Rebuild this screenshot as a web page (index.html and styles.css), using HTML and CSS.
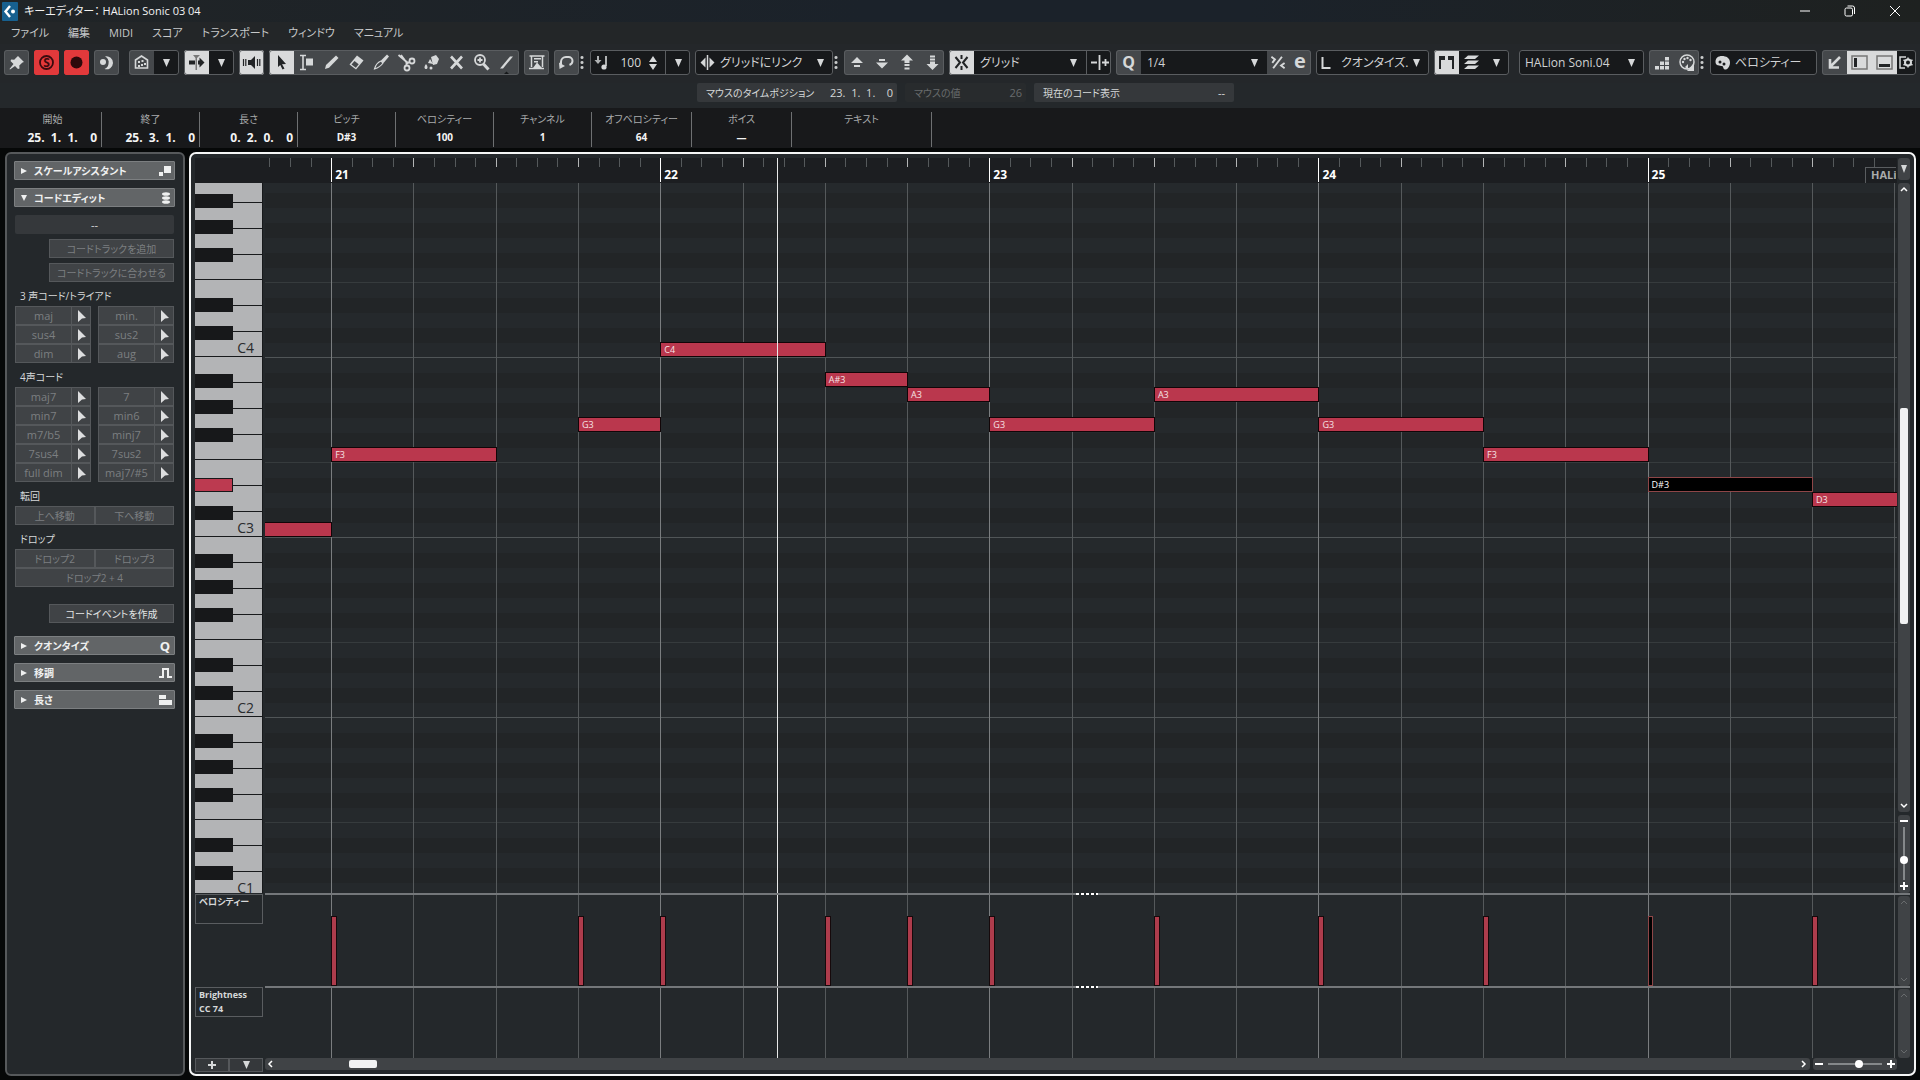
FILE: index.html
```html
<!DOCTYPE html>
<html lang="ja">
<head>
  <meta charset="UTF-8" />
  <meta name="viewport" content="width=device-width, initial-scale=1.0" />
  <title>キーエディター： HALion Sonic 03 04</title>
  <link rel="stylesheet" href="styles.css">
</head>
<body>
  <svg class="sprite" aria-hidden="true">
    <symbol id="down" viewBox="0 0 25 25"><path d="M9 9h7l-3.500 8z"/></symbol>
    <symbol id="cursor" viewBox="0 0 12 14"><path d="M3 1l8 8-4 .4L3 13z"/></symbol>
  </svg>

  <header class="titlebar">
    <svg class="logo" viewBox="0 0 16 19"><rect width="16" height="19" rx="1"/><path d="M8 4L3.500 9.500 8 15" fill="none" stroke="#fff" stroke-width="2.400"/><circle cx="11" cy="9.500" r="2" fill="#fff"/></svg>
    <h1>キーエディター： HALion Sonic 03 04</h1>
    <div class="window-buttons">
      <button aria-label="最小化"><svg viewBox="0 0 12 12"><path d="M1 6h10"/></svg></button>
      <button aria-label="元に戻す"><svg viewBox="0 0 12 12"><rect x="1" y="3" width="7.500" height="8" rx="1.500"/><path d="M3.500 1h5a2 2 0 0 1 2 2v6"/></svg></button>
      <button aria-label="閉じる"><svg viewBox="0 0 12 12"><path d="M1 1l10 10M11 1L1 11"/></svg></button>
    </div>
  </header>

  <nav class="menubar">
    <a href="#">ファイル</a>
    <a href="#">編集</a>
    <a href="#">MIDI</a>
    <a href="#">スコア</a>
    <a href="#">トランスポート</a>
    <a href="#">ウィンドウ</a>
    <a href="#">マニュアル</a>
  </nav>

  <div class="toolbar">
    <div class="group"><button class="tool" aria-label="ピン"><svg viewBox="0 0 25 25"><path d="M14 6l6 6-1.500.5-3.200 3 .2 3-1.500.5-3-3L6 19.500l-.500-.500 4-5-3-3 .7-1.400 3 .1 3-3z"/></svg></button></div>
    <div class="group red"><button class="tool" aria-label="ソロ"><svg viewBox="0 0 25 25"><circle cx="12.500" cy="12.500" r="6.500" fill="none" stroke="#3a0b0e" stroke-width="1.800"/><text x="12.500" y="17" class="mark">S</text></svg></button></div>
    <div class="group red"><button class="tool" aria-label="録音"><svg viewBox="0 0 25 25"><circle cx="12.500" cy="12.500" r="6" fill="#2c090b"/></svg></button></div>
    <div class="group"><button class="tool" aria-label="待機"><svg viewBox="0 0 25 25"><path d="M11 6.500a6.500 6.500 0 1 1-.5 12.500 7 7 0 0 0 .5-12.500z"/><circle cx="9.500" cy="11.500" r="4.800" fill="#45484b"/><circle cx="9" cy="12" r="3"/></svg></button></div>

    <div class="group dark spaced">
      <button class="tool raised" aria-label="表示"><svg viewBox="0 0 25 25"><path d="M6.500 18V10l6-4 6 4v8z" fill="none" stroke="currentColor" stroke-width="1.600"/><path d="M9 11h2v2H9zM12.500 10h2v2h-2zM15 13h2v2h-2zM9 15h2v2H9zM12 14h2v2h-2z"/></svg></button>
      <button class="tool" aria-label="表示メニュー"><svg><use href="#down"/></svg></button>
    </div>
    <div class="group dark">
      <button class="tool on" aria-label="オートスクロール"><svg viewBox="0 0 25 25"><path d="M5 10.500h6v4H5zM14 10.500h1.500V7.500l5 5-5 5v-3H14z"/><path d="M9 5h7l-3 3v12h-1.500V8z" fill="#777"/></svg></button>
      <button class="tool" aria-label="スクロールメニュー"><svg><use href="#down"/></svg></button>
    </div>
    <div class="group"><button class="tool on" aria-label="試聴"><svg viewBox="0 0 25 25"><path d="M9 10h3l4-4v13l-4-4H9z"/><path d="M4.500 9v7M6.800 9v7M18.500 9v7M20.800 9v7" stroke="currentColor" stroke-width="1.200"/></svg></button></div>

    <div class="group tools">
      <button class="tool on" aria-label="選択"><svg viewBox="0 0 25 25"><path d="M9 5l8 9-4 .3 2.500 4.200-2 1-2.200-4.500L9 17z"/></svg></button>
      <button class="tool" aria-label="範囲"><svg viewBox="0 0 25 25"><path d="M6 5.500h6M6 19.500h6M9 5.500v14" stroke="currentColor" stroke-width="1.600"/><path d="M12 8.500h7v7h-7z"/></svg></button>
      <button class="tool" aria-label="鉛筆"><svg viewBox="0 0 25 25"><path d="M6 19l1-4L17 5.500l2.500 2.500-9.500 9.800z"/></svg></button>
      <button class="tool" aria-label="消しゴム"><svg viewBox="0 0 25 25"><path d="M13 5.500l6.500 5-7.500 9-6.500-5z"/><path d="M10.500 11l4.200 3.300-2.900 3.500-4.300-3.200z" fill="#45484b"/></svg></button>
      <button class="tool" aria-label="トリム"><svg viewBox="0 0 25 25"><path d="M5.500 19c1-4 4-7 6.500-8l2 2c-2 3-5 5-8.500 6z" fill="none" stroke="currentColor" stroke-width="1.200"/><path d="M12 10.500l6-6 2 2-5.500 6.500z"/></svg></button>
      <button class="tool" aria-label="はさみ"><svg class="stroked" viewBox="0 0 25 25"><path d="M4.500 5l10 8.500M7 5l5.500 7.500M15.500 12.500l-3 0v3"/><circle cx="18" cy="11" r="2.500"/><circle cx="13" cy="18" r="2.500"/></svg></button>
      <button class="tool" aria-label="のり"><svg viewBox="0 0 25 25"><path d="M12 7l5-2 3 4-2 5-4 1zM11 9l3 5-5-1zM7 14c2 2.500 2 5 0 5s-2-2.500 0-5z"/><circle cx="12" cy="18" r="1.500"/></svg></button>
      <button class="tool" aria-label="ミュート"><svg viewBox="0 0 25 25"><path d="M7 6.500l11 12M18 6.500l-11 12" stroke="currentColor" stroke-width="2.600"/></svg></button>
      <button class="tool" aria-label="ズーム"><svg class="stroked" viewBox="0 0 25 25"><circle cx="11" cy="10" r="5"/><path d="M14.500 14l5 5.500" stroke-width="3"/><path d="M11 7.500v5M8.500 10h5"/></svg></button>
      <button class="tool" aria-label="ライン"><svg viewBox="0 0 25 25"><path d="M6 18.500L16 6.500h3L9 18.500z"/><path d="M9 25l3.500-3.500L16 25z" fill="#16181a"/></svg></button>
    </div>
    <div class="group"><button class="tool" aria-label="自動選択"><svg viewBox="0 0 25 25"><path d="M5.500 6h15M7.500 6v11M18.500 6v11M5 18.500h15" stroke="currentColor" stroke-width="1.500"/><path d="M9 18l4-5.500 5 5.500zM10 8h7v1.500h-7zM10 11h4v1.500h-4z"/></svg></button></div>
    <div class="group"><button class="tool" aria-label="ループ"><svg viewBox="0 0 25 25"><path d="M7 15V12a5 5 0 0 1 5-5h2.500a4 4 0 0 1 4 4c0 2-.5 3-3 4" fill="none" stroke="currentColor" stroke-width="2"/><path d="M5 12.500l6 3.500-5.500 3z"/></svg></button></div>
    <span class="dots"></span>

    <div class="group dark velocity-insert">
      <svg class="icon" viewBox="0 0 25 25"><path d="M7 6v4H4.500L8 14l3.500-4H9V6z" opacity=".8"/><path d="M16 6v10" stroke="currentColor" stroke-width="1.600"/><circle cx="14" cy="17" r="2.600"/></svg>
      <input type="text" value="100" aria-label="挿入ベロシティー">
      <button class="step" aria-label="増減"><svg viewBox="0 0 10 16"><path d="M5 1l4 6H1zM5 15l4-6H1z"/></svg></button>
      <button class="tool divided" aria-label="ベロシティーメニュー"><svg><use href="#down"/></svg></button>
    </div>
    <label class="group dark link">
      <svg class="icon" viewBox="0 0 25 25"><path d="M12.500 5v15" stroke="currentColor" stroke-width="1.500"/><path d="M10.500 7.500v10l-5-5zM14.500 7.500v10l5-5z"/></svg>
      <select aria-label="長さ"><option>グリッドにリンク</option></select>
      <svg class="arrow"><use href="#down"/></svg>
    </label>
    <span class="dots"></span>
    <div class="group">
      <button class="tool" aria-label="上へ"><svg viewBox="0 0 25 25"><path d="M7 13l6-6 6 6zM10 15h6v2h-6z"/></svg></button>
      <button class="tool" aria-label="下へ"><svg viewBox="0 0 25 25"><path d="M10 9h6v2h-6zM7 12.500h12l-6 6z"/></svg></button>
      <button class="tool" aria-label="オクターブ上"><svg viewBox="0 0 25 25"><path d="M7 10.500L13 4.500l6 6h-3.500V13h-5v-2.500zM10.500 14h5v2h-5zM10.500 17.500h5v2h-5z"/></svg></button>
      <button class="tool" aria-label="オクターブ下"><svg viewBox="0 0 25 25"><path d="M11 5.500h5v2h-5zM11 8.500h5v2h-5zM11 11.500h5V14h3.500l-6 6-6-6H11z"/></svg></button>
    </div>

    <label class="group dark snap">
      <span class="tool on"><svg viewBox="0 0 25 25"><path d="M12.500 5v4M12.500 16v4" stroke="currentColor" stroke-width="2"/><path d="M6.500 7l4.500 5.500-4.500 5.500M18.500 7l-4.500 5.500 4.500 5.500" fill="none" stroke="currentColor" stroke-width="2"/></svg></span>
      <select aria-label="スナップタイプ"><option>グリッド</option></select>
      <svg class="arrow"><use href="#down"/></svg>
      <span class="tool divided"><svg viewBox="0 0 25 25"><path d="M12.500 5v15M4 12.500h6M15 12.500h7M18.500 9v7" stroke="currentColor" stroke-width="1.800"/></svg></span>
    </label>
    <div class="group dark quantize">
      <span class="tool raised"><svg viewBox="0 0 25 25"><text x="12.500" y="18" class="mark big">Q</text></svg></span>
      <select aria-label="クオンタイズ値"><option>1/4</option></select>
      <svg class="arrow"><use href="#down"/></svg>
      <button class="tool raised narrow" aria-label="ソフトクオンタイズ"><svg viewBox="0 0 25 25"><path d="M7 19L17 6M5 6l4 3-3 4M20 13l-4 3 4 3" fill="none" stroke="currentColor" stroke-width="2.200"/></svg></button>
      <button class="tool raised narrow" aria-label="クオンタイズパネル"><svg viewBox="0 0 22 25"><text x="11" y="18" class="mark large">e</text></svg></button>
    </div>
    <label class="group dark length">
      <svg class="icon" viewBox="0 0 25 25"><path d="M6.500 7v11h8" fill="none" stroke="currentColor" stroke-width="2"/></svg>
      <select aria-label="長さクオンタイズ"><option>クオンタイズ.</option></select>
      <svg class="arrow"><use href="#down"/></svg>
    </label>
    <div class="group dark">
      <button class="tool on" aria-label="パートの境界"><svg viewBox="0 0 25 25"><path d="M5 6h6v4H7v9H5zM20 6h-6v4h4v9h2z"/></svg></button>
      <button class="tool" aria-label="レイヤー"><svg viewBox="0 0 25 25"><path d="M9 5.500h11l-4 3.500H5zM9 10.500h11l-4 3.500H5zM9 15.500h11l-4 3.500H5z"/></svg></button>
      <button class="tool" aria-label="レイヤーメニュー"><svg><use href="#down"/></svg></button>
    </div>
    <label class="group dark part spaced">
      <select aria-label="パート"><option>HALion Soni.04</option></select>
      <svg class="arrow"><use href="#down"/></svg>
    </label>
    <div class="group">
      <button class="tool" aria-label="ステップ入力"><svg viewBox="0 0 25 25"><path d="M6 16h4v3.500H6zM11 16h4v3.500h-4zM16 16h4v3.500h-4zM11 11.500h4V15h-4zM16 11.500h4V15h-4zM16 7h4v3.500h-4z"/></svg></button>
      <button class="tool" aria-label="MIDI 入力"><svg viewBox="0 0 25 25"><circle cx="13" cy="12" r="7" fill="none" stroke="currentColor" stroke-width="1.500"/><circle cx="9" cy="12" r="1.200"/><circle cx="10.500" cy="9" r="1.200"/><circle cx="13.500" cy="8" r="1.200"/><circle cx="16.500" cy="10" r="1.200"/><path d="M11 17l3-3v6zM20 13v8h-7z"/></svg></button>
    </div>
    <span class="dots"></span>
    <label class="group dark colors">
      <svg class="icon" viewBox="0 0 25 25"><path d="M12 6c4 0 8 2 8 6.500S17 20 15 19.500c-2.500-.5-1-3-3-3.500-2-.4-6.500 0-6.500-4S8 6 12 6z"/><circle cx="10" cy="12" r="1.500" fill="#17191b"/><circle cx="14" cy="14" r="1.500" fill="#17191b"/></svg>
      <select aria-label="イベントカラー"><option>ベロシティー</option></select>
    </label>
    <div class="group dark">
      <button class="tool raised" aria-label="別ウィンドウ"><svg viewBox="0 0 25 25"><path d="M18 7L9 16M8 9v8.500h9" fill="none" stroke="currentColor" stroke-width="2.600"/></svg></button>
      <button class="tool on" aria-label="左ゾーン"><svg viewBox="0 0 25 25"><rect x="5" y="6" width="15" height="13" fill="none" stroke="#777" stroke-width="1.500"/><path d="M7 8h3v9H7z"/></svg></button>
      <button class="tool on" aria-label="下ゾーン"><svg viewBox="0 0 25 25"><rect x="5" y="6" width="15" height="13" fill="none" stroke="#777" stroke-width="1.500"/><path d="M7 14h11v3H7z"/></svg></button>
      <button class="tool setup" aria-label="設定"><svg viewBox="0 0 19 25"><path d="M9 7H3v11h5" fill="none" stroke="currentColor" stroke-width="1.500"/><circle cx="11" cy="12.500" r="3" fill="none" stroke="currentColor" stroke-width="2"/><path d="M11 7.500v2M11 15.500v2M6.500 10l2 1M13.500 14l2 1M6.500 15l2-1M13.500 11l2-1" stroke="currentColor" stroke-width="1.500"/></svg></button>
    </div>
  </div>

  <div class="status">
    <div class="status-box"><span>マウスのタイムポジション</span><span class="value">23.&nbsp; 1.&nbsp; 1.&nbsp;&nbsp; &nbsp;0</span></div>
    <div class="status-box faded"><span>マウスの値</span><span class="value">26</span></div>
    <div class="status-box"><span>現在のコード表示</span><span class="value">--</span></div>
  </div>

  <dl class="info-line">
    <div class="time"><dt>開始</dt><dd>25.&nbsp; 1.&nbsp; 1.&nbsp; &nbsp; 0</dd></div>
    <div class="time"><dt>終了</dt><dd>25.&nbsp; 3.&nbsp; 1.&nbsp; &nbsp; 0</dd></div>
    <div class="time"><dt>長さ</dt><dd>0.&nbsp; 2.&nbsp; 0.&nbsp; &nbsp; 0</dd></div>
    <div><dt>ピッチ</dt><dd>D#3</dd></div>
    <div><dt>ベロシティー</dt><dd>100</dd></div>
    <div><dt>チャンネル</dt><dd>1</dd></div>
    <div><dt>オフベロシティー</dt><dd>64</dd></div>
    <div><dt>ボイス</dt><dd>—</dd></div>
    <div class="wide"><dt>テキスト</dt><dd></dd></div>
  </dl>

  <div class="workspace">
    <aside class="inspector">
      <button class="section"><svg viewBox="0 0 8 8"><path d="M1 1l6 3-6 3z"/></svg>スケールアシスタント<svg class="mode" viewBox="0 0 14 12"><path d="M6 1h7v7H6zM1 7h4v4H1z"/></svg></button>
      <button class="section"><svg viewBox="0 0 8 8"><path d="M1 1h6L4 7z"/></svg>コードエディット<svg class="mode" viewBox="0 0 14 12"><ellipse cx="8" cy="2" rx="4" ry="1.800"/><ellipse cx="8" cy="6" rx="4" ry="1.800"/><ellipse cx="8" cy="10" rx="4" ry="1.800"/></svg></button>
      <div class="chord-edit">
        <div class="chord-name">--</div>
        <button class="short" disabled>コードトラックを追加</button>
        <button class="short" disabled>コードトラックに合わせる</button>
        <h2>3 声コード/トライアド</h2>
        <div class="chords" data-chords="maj,min.,sus4,sus2,dim,aug"></div>
        <h2>4声コード</h2>
        <div class="chords" data-chords="maj7,7,min7,min6,m7/b5,minj7,7sus4,7sus2,full dim,maj7/#5"></div>
        <h2>転回</h2>
        <div class="pair"><button disabled>上へ移動</button><button disabled>下へ移動</button></div>
        <h2>ドロップ</h2>
        <div class="pair"><button disabled>ドロップ2</button><button disabled>ドロップ3</button><button class="full" disabled>ドロップ2 + 4</button></div>
        <button class="short create">コードイベントを作成</button>
      </div>
      <button class="section"><svg viewBox="0 0 8 8"><path d="M1 1l6 3-6 3z"/></svg>クオンタイズ<span class="mode q">Q</span></button>
      <button class="section"><svg viewBox="0 0 8 8"><path d="M1 1l6 3-6 3z"/></svg>移調<svg class="mode" viewBox="0 0 14 12"><path d="M1 10h4V2h5v8h4" fill="none" stroke="currentColor" stroke-width="2"/></svg></button>
      <button class="section"><svg viewBox="0 0 8 8"><path d="M1 1l6 3-6 3z"/></svg>長さ<svg class="mode" viewBox="0 0 14 12"><path d="M1 1h7v4H1zM1 6h13v5H1z"/></svg></button>
    </aside>

    <main class="editor">
      <div class="corner"></div>
      <div class="ruler lane" id="ruler"><span class="part-name">HALi</span></div>
      <button class="ruler-menu" aria-label="ルーラー"><svg viewBox="0 0 12 22"><path d="M3 7h6l-3 8z"/></svg></button>

      <div class="keyboard" id="keyboard"></div>
      <div class="roll lane" id="roll"></div>
      <div class="side">
        <div class="scroll">
          <button aria-label="上"><svg viewBox="0 0 12 12"><path d="M3 8l3-3 3 3"/></svg></button>
          <div class="thumb-area"><div class="thumb"></div></div>
          <button aria-label="下"><svg viewBox="0 0 12 12"><path d="M3 4l3 3 3-3"/></svg></button>
        </div>
        <div class="zoom vertical">
          <button aria-label="縮小"><svg viewBox="0 0 12 12"><path d="M2 6h8"/></svg></button>
          <input type="range" value="64" aria-label="縦ズーム">
          <button aria-label="拡大"><svg viewBox="0 0 12 12"><path d="M2 6h8M6 2v8"/></svg></button>
        </div>
      </div>

      <div class="lane-head"><div class="lane-name">ベロシティー</div></div>
      <div class="controller lane" id="velocity"><i class="handle"></i></div>
      <div class="side faint"><div class="scroll"><svg viewBox="0 0 12 12"><path d="M3 8l3-3 3 3"/></svg><svg viewBox="0 0 12 12"><path d="M3 4l3 3 3-3"/></svg></div></div>

      <div class="lane-head"><div class="lane-name">Brightness<br>CC 74</div></div>
      <div class="controller lane" id="brightness"><i class="handle"></i></div>
      <div class="side faint"><div class="scroll"><svg viewBox="0 0 12 12"><path d="M3 8l3-3 3 3"/></svg><svg viewBox="0 0 12 12"><path d="M3 4l3 3 3-3"/></svg></div></div>

      <div class="lane-buttons">
        <button aria-label="レーンを追加"><svg viewBox="0 0 12 12"><path d="M2 6h8M6 2v8" stroke="currentColor" stroke-width="2"/></svg></button>
        <button aria-label="レーンメニュー"><svg viewBox="0 0 12 12"><path d="M3 2h7l-3.500 8z"/></svg></button>
      </div>
      <div class="bottom">
        <div class="scroll horizontal">
          <button aria-label="左"><svg viewBox="0 0 12 12"><path d="M7 3L4 6l3 3"/></svg></button>
          <div class="thumb-area"><div class="thumb"></div></div>
          <button aria-label="右"><svg viewBox="0 0 12 12"><path d="M4 3l3 3-3 3"/></svg></button>
        </div>
        <div class="zoom">
          <button aria-label="縮小"><svg viewBox="0 0 12 12"><path d="M2 6h8"/></svg></button>
          <input type="range" value="58" aria-label="横ズーム">
          <button aria-label="拡大"><svg viewBox="0 0 12 12"><path d="M2 6h8M6 2v8"/></svg></button>
        </div>
      </div>
    </main>
  </div>
  <script src="script.js"></script>
</body>
</html>
```

FILE: styles.css
```css
* {
  box-sizing: border-box;
}
body {
  margin: 0;
  height: 100vh;
  display: flex;
  flex-direction: column;
  overflow: hidden;
  background: #060808;
  color: #d6d8d9;
  font-family: "Open Sans", "Noto Sans CJK JP", sans-serif;
  font-size: 11px;
  line-height: 1;
  font-feature-settings: "palt";
}
button, input, select {
  margin: 0;
  padding: 0;
  border: 0;
  border-radius: 0;
  background: none;
  color: inherit;
  font: inherit;
  font-feature-settings: inherit;
}
svg {
  display: block;
  fill: currentColor;
}
.sprite {
  position: absolute;
  width: 0;
  height: 0;
}

/* title and menu */
.titlebar {
  height: 22px;
  flex: none;
  display: flex;
  align-items: center;
  padding-left: 2px;
  background: linear-gradient(to right, #202426, #1b222a 45%, #1b222a 65%, #1e2120);
}
.logo {
  width: 16px;
  height: 19px;
  fill: #17608f;
}
.titlebar h1 {
  margin: 0 0 0 6px;
  font-size: 11px;
  line-height: 16px;
  font-weight: 400;
  color: #f2f2f2;
}
.window-buttons {
  margin-left: auto;
  display: flex;
  padding-right: 3px;
}
.window-buttons button {
  width: 45px;
  height: 22px;
  display: flex;
  align-items: center;
  justify-content: center;
}
.window-buttons svg {
  width: 12px;
  height: 12px;
  fill: none;
  stroke: #fff;
}
.menubar {
  height: 22px;
  flex: none;
  display: flex;
  align-items: center;
  gap: 19px;
  padding: 0 0 2px 11px;
  background: #232628;
}
.menubar a {
  color: #c6c8c9;
  text-decoration: none;
  white-space: nowrap;
}

/* toolbar */
.toolbar {
  flex: none;
  display: flex;
  gap: 5px;
  padding: 6px 4px 8px;
  background: #24272a;
}
.group {
  height: 25px;
  flex: none;
  display: flex;
  align-items: center;
  overflow: hidden;
  border-radius: 3px;
  background: #45484b;
  outline: 1px solid #5a5d60;
  outline-offset: -1px;
}
.group.dark {
  background: #17191b;
}
.group.red {
  background: #e2393b;
  outline-color: #e2393b;
}
.spaced {
  margin-left: 5px;
}
.tool {
  width: 25px;
  height: 25px;
  flex: none;
}
.tool svg, .arrow, .icon {
  width: 25px;
  height: 25px;
  flex: none;
}
.stroked {
  fill: none;
  stroke: currentColor;
  stroke-width: 1.8;
}
.raised {
  background: #45484b;
}
.on {
  background: #d9dadb;
  color: #222426;
}
.divided {
  border-left: 1px solid #5a5d60;
}
.tool.narrow, .narrow svg {
  width: 22px;
}
.tool.setup, .setup svg {
  width: 19px;
}
.mark {
  font-weight: 700;
  font-size: 12px;
  text-anchor: middle;
  fill: #3a0b0e;
}
.mark.big {
  font-size: 16px;
  fill: currentColor;
}
.mark.large {
  font-size: 20px;
  fill: currentColor;
}
.dots {
  width: 6px;
  height: 25px;
  margin-left: -5px;
  background: radial-gradient(circle, #c8caca 1px, transparent 2px) 1px 5px / 4px 5px repeat-y content-box;
  padding: 5px 0;
}
.group select {
  flex: 1;
  min-width: 0;
  height: 25px;
  appearance: none;
  color: #d0d2d3;
  font-size: 12px;
}
.arrow {
  pointer-events: none;
}
.velocity-insert {
  width: 100px;
}
.velocity-insert input {
  width: 26px;
  text-align: right;
  font-size: 12px;
}
.step {
  flex: 1;
  display: flex;
  justify-content: center;
}
.step svg {
  width: 10px;
  height: 16px;
}
.link {
  width: 138px;
}
.snap {
  width: 162px;
}
.snap select, .quantize select, .part select {
  padding-left: 6px;
}
.quantize {
  width: 195px;
}
.length {
  width: 113px;
}
.length .arrow {
  margin-left: -6px;
}
.part {
  width: 125px;
}
.colors {
  width: 107px;
}

/* mouse status */
.status {
  flex: none;
  display: flex;
  justify-content: center;
  gap: 8px;
  padding: 0 0 6px 11px;
  background: #24282b;
}
.status-box {
  width: 200px;
  height: 19px;
  display: flex;
  align-items: center;
  justify-content: space-between;
  padding: 0 4px 0 9px;
  border-radius: 2px;
  background: #35383b;
  font-size: 10px;
}
.status-box .value {
  font-size: 11px;
}
.status-box:last-child {
  padding-right: 9px;
}
.status-box.faded {
  width: 121px;
  background: #282b2d;
  color: #686b6d;
}

/* info line */
.info-line {
  height: 40px;
  flex: none;
  display: flex;
  margin: 0;
  padding: 4px 0 1px 4px;
  background: #18191b;
}
.info-line div {
  width: 98px;
  border-right: 1px solid #6e7072;
  text-align: center;
}
.info-line div:nth-child(7), .info-line div:nth-child(8) {
  width: 100px;
}
.info-line .wide {
  width: 140px;
}
.info-line dt {
  height: 16px;
  line-height: 15px;
  font-size: 10px;
  color: #a9abac;
}
.info-line dd {
  margin: 0;
  line-height: 19px;
  font-size: 10px;
  font-weight: 700;
  color: #f4f4f4;
}
.info-line .time dd {
  padding-right: 4px;
  font-size: 12px;
  text-align: right;
  white-space: nowrap;
}

/* inspector */
.workspace {
  flex: 1;
  min-height: 0;
  display: flex;
  gap: 4px;
  padding: 4px 4px 4px 5px;
}
.inspector {
  width: 180px;
  flex: none;
  padding: 7px;
  border: 2px solid #56595b;
  border-radius: 6px;
  background: #24282b;
}
.section {
  width: 161px;
  height: 19px;
  display: flex;
  align-items: center;
  gap: 6px;
  margin-bottom: 8px;
  padding: 0 2px 0 5px;
  border: 1px solid #7c7f81;
  border-radius: 1px;
  background: #626567;
  color: #eff0f0;
  font-size: 10px;
  font-weight: 700;
}
.section svg {
  width: 8px;
  height: 8px;
}
.section .mode {
  width: 14px;
  height: 12px;
  margin-left: auto;
}
.section .q {
  font-size: 13px;
  line-height: 12px;
}
.chord-edit {
  display: flex;
  flex-direction: column;
  gap: 5px;
  padding: 0 2px 0 1px;
  margin-bottom: 13px;
}
.chord-name {
  height: 19px;
  line-height: 19px;
  text-align: center;
  border-radius: 2px;
  background: #35383b;
}
.chord-edit button {
  height: 19px;
  border: 1px solid #55585b;
  background: #404346;
  color: #e2e3e4;
  font-size: 10px;
}
.chord-edit button:disabled {
  color: #7c7f81;
}
.chord-edit .chord button {
  font-size: 11px;
}
.chord-edit .short {
  width: 125px;
  align-self: flex-end;
}
.chord-edit .create {
  margin-top: 12px;
}
.chord-edit h2 {
  height: 24px;
  margin: -5px 0;
  padding: 4px 0 0 5px;
  font-size: 10px;
  line-height: 20px;
  font-weight: 400;
}
.chords {
  display: grid;
  grid-template-columns: 1fr 1fr;
  column-gap: 7px;
}
.chord {
  display: grid;
  grid-template-columns: 57px 1fr;
}
.chord button + button {
  display: flex;
  align-items: center;
  justify-content: center;
  border-left: 0;
}
.chord svg {
  width: 12px;
  height: 14px;
  color: #dddedf;
}
.pair {
  display: grid;
  grid-template-columns: 1fr 1fr;
}
.pair .full {
  grid-column: span 2;
}

/* editor */
.editor {
  flex: 1;
  min-width: 0;
  display: grid;
  grid-template-columns: 69px 1fr 12px;
  grid-template-rows: 25px 1fr 93px 72px 12px;
  column-gap: 1px;
  padding: 4px;
  border: 2px solid #f5f6f6;
  border-radius: 7px;
  background: #24282b;
}
.corner, .ruler {
  background: #1c1e21;
}
.corner {
  margin-right: -1px;
}
.lane {
  position: relative;
  overflow: hidden;
}
.line, .tick, .playhead {
  position: absolute;
  top: 0;
  bottom: 0;
  width: 1px;
  background: #55595b;
}
.line.bar {
  background: #7a7d7f;
}
.ruler .line.bar {
  background: #fff;
  bottom: 1px;
}
.tick {
  height: 9px;
  bottom: auto;
}
.tick.beat {
  background: #b3b5b6;
}
.playhead {
  background: #e8e9e9;
}
.bar-number {
  position: absolute;
  top: 11px;
  margin-left: 4px;
  font-size: 12px;
  font-weight: 700;
  color: #fff;
}
.part-name {
  position: absolute;
  top: 9px;
  right: 1px;
  width: 31px;
  height: 16px;
  overflow: hidden;
  padding-left: 5px;
  border: 1px solid #5a5d60;
  border-width: 1px 0 0 1px;
  background: #1c1e21;
  line-height: 14px;
  font-weight: 700;
  color: #a9abac;
}
.ruler-menu {
  height: 22px;
  border-radius: 3px;
  background: #404346;
}

/* piano keys */
.keyboard {
  min-height: 0;
  margin-right: 1px;
  overflow: hidden;
  border-right: 1px solid #17191b;
}
.octave {
  position: relative;
  height: 180px;
}
.octave:first-child {
  margin-top: -6px;
}
.white {
  height: 26px;
  border-bottom: 1px solid #17191b;
  background: #b3b4b6;
}
.white.f, .white.c {
  height: 25px;
}
.white.c {
  padding: 8px 8px 0 0;
  text-align: right;
  font-size: 14px;
  line-height: 16px;
  color: #292b2d;
}
.black {
  position: absolute;
  left: 0;
  width: 38px;
  height: 14px;
  background: #17181a;
}
.black.pressed {
  border: 1px solid #17181a;
  border-left: 0;
  background: #bc3a50;
}
.roll {
  background:
    linear-gradient(#25292c 15px, #222527 15px 30px, #25292c 30px 45px, #222527 45px 60px,
      #25292c 60px 75px, #222527 75px 90px, #25292c 90px 104px, #363b3d 104px 105px,
      #25292c 105px 120px, #222527 120px 135px, #25292c 135px 150px, #222527 150px 165px,
      #25292c 165px 179px, #505557 179px) 0 -5px / 100% 180px;
}
.note {
  position: absolute;
  height: 15px;
  padding-left: 3px;
  border: 1px solid #120507;
  background: #ba374d;
  color: #f6e4e6;
  font-size: 9px;
  line-height: 14px;
}
.note.selected {
  background: #000;
  border: 1px solid #8e4648;
  color: #fff;
}

/* controller lanes */
.lane-head {
  padding: 1px 1px 0 0;
}
.lane-name {
  height: 30px;
  padding: 0 3px;
  border: 1px solid #5a5d60;
  font-size: 9px;
  line-height: 14px;
  font-weight: 700;
}
.controller {
  border-top: 2px solid #74777a;
  overflow: visible;
}
.handle {
  position: absolute;
  top: -2px;
  left: 50%;
  width: 22px;
  height: 2px;
  margin-left: -5px;
  background: repeating-linear-gradient(to right, #fff 0 3px, #24282b 3px 5px);
}
.velocity-bar {
  position: absolute;
  bottom: 0;
  width: 6px;
  border: 1px solid #16090b;
  background: #ae3c4c;
}
.velocity-bar.selected {
  width: 5px;
  background: #000;
  border-color: #8e4648;
}

/* scroll bars and zoom */
.side {
  min-height: 0;
  display: flex;
  flex-direction: column;
  gap: 3px;
}
.side.faint {
  margin-left: -1px;
  padding-left: 1px;
  border-top: 2px solid #74777a;
  padding-top: 1px;
}
.scroll, .zoom {
  display: flex;
  flex-direction: column;
  border-radius: 3px;
  background: #404346;
}
.scroll {
  flex: 1;
  justify-content: space-between;
}
.scroll svg, .zoom svg {
  width: 12px;
  height: 12px;
  fill: none;
  stroke: #fff;
  stroke-width: 2;
}
.scroll svg {
  stroke-width: 1.5;
}
.faint .scroll svg {
  stroke: #686b6d;
  stroke-width: 1;
}
.thumb-area {
  flex: 1;
}
.thumb {
  background: #f1f2f3;
  border-radius: 2px;
}
.side .thumb-area {
  display: grid;
  grid-template-rows: 213fr 216fr 176fr;
  padding: 0 2px;
}
.side .thumb {
  grid-row: 2;
}
.zoom.vertical {
  height: 78px;
  padding: 0 0 1px;
}
.zoom input {
  flex: 1;
  min-width: 0;
  min-height: 0;
  appearance: none;
}
.zoom.vertical input {
  writing-mode: vertical-lr;
  width: 12px;
}
.zoom input::-webkit-slider-runnable-track {
  height: 2px;
  background: #85888a;
}
.zoom.vertical input::-webkit-slider-runnable-track {
  width: 2px;
  height: auto;
}
.zoom input::-webkit-slider-thumb {
  appearance: none;
  width: 8px;
  height: 8px;
  margin-top: -3px;
  border-radius: 50%;
  background: #fff;
}
.zoom.vertical input::-webkit-slider-thumb {
  margin: 0 0 0 -3px;
}
.lane-buttons {
  display: grid;
  grid-template-columns: 1fr 1fr;
  padding-right: 1px;
}
.lane-buttons button {
  display: flex;
  align-items: center;
  justify-content: center;
  border: 1px solid #55585b;
  background: #35383b;
}
.lane-buttons svg {
  width: 12px;
  height: 12px;
}
.bottom {
  display: flex;
  gap: 3px;
}
.bottom .scroll, .bottom .zoom {
  flex-direction: row;
}
.bottom .zoom {
  width: 84px;
}
.bottom .zoom input {
  margin: 0 3px;
}
.horizontal .thumb-area {
  display: grid;
  grid-template-columns: 72fr 28fr 1421fr;
  padding: 2px 0;
}
.horizontal .thumb {
  grid-column: 2;
}
```

FILE: script.js
```js
// visible range in bars, and y of the C3 row's lower edge inside the roll
const START = 20.799;
const SPAN = 4.959;
const C3_BOTTOM = 355;
const ROW = 15;
const PLAYHEAD = 22.354;
const NAMES = ['C', 'C#', 'D', 'D#', 'E', 'F', 'F#', 'G', 'G#', 'A', 'A#', 'B'];

const notes = [
  { name: 'C3', from: 20.5, to: 21 },
  { name: 'F3', from: 21, to: 21.5 },
  { name: 'G3', from: 21.75, to: 22 },
  { name: 'C4', from: 22, to: 22.5 },
  { name: 'A#3', from: 22.5, to: 22.75 },
  { name: 'A3', from: 22.75, to: 23 },
  { name: 'G3', from: 23, to: 23.5 },
  { name: 'A3', from: 23.5, to: 24 },
  { name: 'G3', from: 24, to: 24.5 },
  { name: 'F3', from: 24.5, to: 25 },
  { name: 'D#3', from: 25, to: 25.5, selected: true },
  { name: 'D3', from: 25.5, to: 26 }
];

const ruler = document.getElementById('ruler');
const roll = document.getElementById('roll');
const velocity = document.getElementById('velocity');
const brightness = document.getElementById('brightness');
const keyboard = document.getElementById('keyboard');

function x(time) {
  return (time - START) / SPAN * 100 + '%';
}

function add(parent, className, left, text) {
  const el = document.createElement('div');
  el.className = className;
  el.style.left = left;
  if (text) el.textContent = text;
  parent.appendChild(el);
  return el;
}

// ruler
for (let i = 333; i < 412; i++) {
  const t = i / 16;
  if (i % 16 === 0) {
    add(ruler, 'line bar', x(t));
    add(ruler, 'bar-number', x(t), String(t));
  } else {
    add(ruler, i % 4 === 0 ? 'tick beat' : 'tick', x(t));
  }
}

// beat lines
[roll, velocity, brightness].forEach(lane => {
  for (let t = 21; t < START + SPAN; t += 0.25) {
    add(lane, t % 1 === 0 ? 'line bar' : 'line', x(t));
  }
});

// notes and their velocities
notes.forEach(n => {
  const octave = Number(n.name.slice(-1));
  const step = NAMES.indexOf(n.name.slice(0, -1)) + (octave - 3) * 12;
  const state = n.selected ? ' selected' : '';
  const el = add(roll, 'note' + state, x(n.from), n.from < START ? '' : n.name);
  el.style.width = `calc(${(n.to - n.from) / SPAN * 100}% + 1px)`;
  el.style.top = C3_BOTTOM - (step + 1) * ROW - 1 + 'px';
  if (n.from >= START) {
    add(velocity, 'velocity-bar' + state, x(n.from)).style.height = '77%';
  }
});

[ruler, roll, velocity, brightness].forEach(lane => add(lane, 'playhead', x(PLAYHEAD)));

// piano keys, top octave first
const blacks = [17, 43, 71, 121, 149];
for (let o = 4; o >= 1; o--) {
  const octave = document.createElement('div');
  octave.className = 'octave';
  octave.innerHTML = ['b', 'a', 'g', 'f', 'e', 'd', 'c']
    .map(k => `<div class="white ${k}">${k === 'c' ? 'C' + o : ''}</div>`).join('') +
    blacks.map((top, i) => `<div class="black${o === 3 && i === 3 ? ' pressed' : ''}" style="top:${top}px"></div>`).join('');
  keyboard.appendChild(octave);
}

// chord buttons
document.querySelectorAll('.chords').forEach(box => {
  box.innerHTML = box.dataset.chords.split(',').map(name =>
    `<div class="chord"><button disabled>${name}</button><button aria-label="${name} 試聴"><svg><use href="#cursor"/></svg></button></div>`
  ).join('');
});
```
